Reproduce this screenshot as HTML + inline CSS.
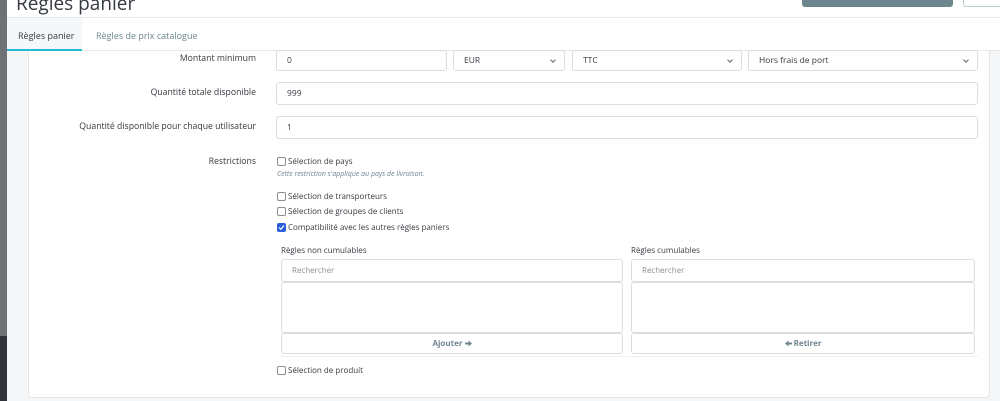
<!DOCTYPE html>
<html><head><meta charset="utf-8"><style>
*{box-sizing:border-box;margin:0;padding:0}
body{width:1000px;height:401px;overflow:hidden;background:#fff;font-family:"Open Sans","Liberation Sans",sans-serif;color:#363a41;position:relative;font-size:9px}
.a{position:absolute}
.inp{position:absolute;border:1px solid #d9dee2;border-radius:3px;background:#fff;font-size:8.5px;padding-left:10px;display:flex;align-items:center;color:#363a41}
.sel::after{content:"";position:absolute;right:9px;top:7px;width:3px;height:3px;border-right:1px solid #666;border-bottom:1px solid #666;transform:rotate(45deg)}
.lbl{position:absolute;right:744px;font-size:8.7px;color:#363a41;white-space:nowrap}
.cb{position:absolute;left:277px;width:9px;height:9px;border:1px solid #8a8f95;border-radius:2px;background:#fff}
.ct{position:absolute;left:288px;font-size:8px;color:#363a41;white-space:nowrap}
</style></head><body>
<div class="a" style="left:0;top:0;width:7px;height:336px;background:#6e7176"></div>
<div class="a" style="left:0;top:336px;width:7px;height:65px;background:#30333a"></div>
<div class="a" style="left:7px;top:51px;width:993px;height:350px;background:#f4f6f8"></div>
<div class="a" style="left:7px;top:0;width:993px;height:18px;background:#fff;border-bottom:1px solid #e6e9ec"></div>
<div class="a" style="left:16px;top:-10px;font-size:19px;color:#363a41">Règles panier</div>
<div class="a" style="left:802px;top:0;width:151px;height:7px;background:#6c868e;border-radius:0 0 3px 3px"></div>
<div class="a" style="left:963px;top:0;width:40px;height:7px;border:1px solid #bbcdd2;border-top:none;border-radius:0 0 3px 3px;background:#fff"></div>
<div class="a" style="left:7px;top:18px;width:993px;height:33px;background:#fff;border-bottom:1px solid #e6e9ec"></div>
<div class="a" style="left:7px;top:18px;width:75px;height:33px;background:#f4f8fb;border-bottom:2px solid #25b9d7"></div>
<div class="a" style="left:18px;top:29px;font-size:9px;color:#363a41">Règles panier</div>
<div class="a" style="left:96px;top:29px;font-size:9px;color:#6c868e">Règles de prix catalogue</div>
<div class="a" style="left:28px;top:51px;width:962px;height:347px;background:#fff;border:1px solid #e3e6e9;border-top:none;border-radius:0 0 4px 4px"></div>
<div class="lbl" style="top:52px">Montant minimum</div>
<div class="inp" style="left:276px;top:50px;width:171px;height:21px">0</div>
<div class="inp sel" style="left:453px;top:50px;width:112px;height:21px">EUR</div>
<div class="inp sel" style="left:572px;top:50px;width:170px;height:21px">TTC</div>
<div class="inp sel" style="left:748px;top:50px;width:230px;height:21px">Hors frais de port</div>
<div class="lbl" style="top:86px">Quantité totale disponible</div>
<div class="inp" style="left:276px;top:82px;width:702px;height:23px">999</div>
<div class="lbl" style="top:120px">Quantité disponible pour chaque utilisateur</div>
<div class="inp" style="left:276px;top:116px;width:702px;height:23px">1</div>
<div class="lbl" style="top:155px">Restrictions</div>
<div class="cb" style="top:157px"></div><div class="ct" style="top:156px">Sélection de pays</div>
<div class="a" style="left:277px;top:170px;font-size:7px;font-style:italic;color:#6c868e">Cette restriction s'applique au pays de livraison.</div>
<div class="cb" style="top:192px"></div><div class="ct" style="top:191px">Sélection de transporteurs</div>
<div class="cb" style="top:207px"></div><div class="ct" style="top:206px">Sélection de groupes de clients</div>
<div class="cb" style="top:223px;background:#2b5fd9;border-color:#2b5fd9"><svg width="7" height="7" viewBox="0 0 7 7" style="position:absolute;left:0;top:0"><path d="M1 3.5L2.8 5.3L6 1.5" stroke="#fff" stroke-width="1.2" fill="none"/></svg></div><div class="ct" style="top:222px">Compatibilité avec les autres règles paniers</div>
<div class="a" style="left:281px;top:245px;font-size:8px">Règles non cumulables</div>
<div class="inp" style="left:281px;top:259px;width:342px;height:23px;color:#8a8f95;font-size:8px">Rechercher</div>
<div class="inp" style="left:281px;top:282px;width:342px;height:51px"></div>
<div class="inp" style="left:281px;top:333px;width:342px;height:21px;justify-content:center;padding:0;color:#6c868e;font-weight:bold;font-size:8px">Ajouter&nbsp;<svg width="7" height="7" viewBox="0 0 7 7"><path d="M0 2.5H3.5V0.5L7 3.5L3.5 6.5V4.5H0Z" fill="#6c868e"/></svg></div>
<div class="a" style="left:631px;top:245px;font-size:8px">Règles cumulables</div>
<div class="inp" style="left:631px;top:259px;width:344px;height:23px;color:#8a8f95;font-size:8px">Rechercher</div>
<div class="inp" style="left:631px;top:282px;width:344px;height:51px"></div>
<div class="inp" style="left:631px;top:333px;width:344px;height:21px;justify-content:center;padding:0;color:#6c868e;font-weight:bold;font-size:8px"><svg width="7" height="7" viewBox="0 0 7 7"><path d="M7 2.5H3.5V0.5L0 3.5L3.5 6.5V4.5H7Z" fill="#6c868e"/></svg>&nbsp;Retirer</div>
<div class="a" style="left:281px;top:356px;width:697px;height:1px;background:#eef0f2"></div>
<div class="cb" style="top:366px"></div><div class="ct" style="top:365px">Sélection de produit</div>
</body></html>
